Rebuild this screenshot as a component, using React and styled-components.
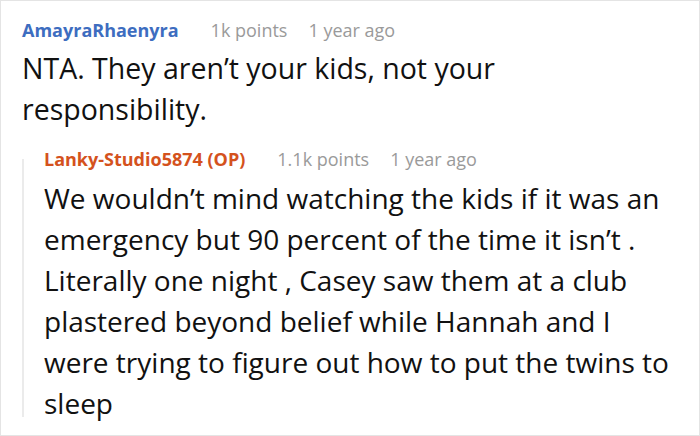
import React from "react";
import styled, { createGlobalStyle } from "styled-components";

const GlobalStyle = createGlobalStyle`
  html, body {
    margin: 0;
    padding: 0;
    background: #fff;
  }
  * {
    box-sizing: border-box;
  }
`;

const Frame = styled.div`
  width: 700px;
  height: 436px;
  border: 1px solid #e4e4e4;
  padding: 17px 0 0 21px;
  font-family: "Open Sans", "Noto Sans", sans-serif;
  color: #111;
  overflow: hidden;
`;

const Comment = styled.div`
  display: flex;
  flex-direction: column;
`;

const Meta = styled.div`
  display: flex;
  align-items: baseline;
  font-size: 18px;
  line-height: 24px;
  white-space: nowrap;
`;

const Author = styled.span`
  font-weight: 700;
  color: ${(p) => (p.$op ? "#d4521d" : "#3d6dc0")};
  margin-right: 32px;
`;

const Info = styled.span`
  color: #9a9a9a;
  margin-right: 21px;
`;

const Body = styled.div`
  margin-top: ${(p) => p.$top}px;
  font-size: ${(p) => p.$size}px;
  line-height: 41px;
`;

const Line = styled.span`
  display: block;
  white-space: nowrap;
`;

const Reply = styled.div`
  position: relative;
  margin-top: 17px;
  padding-left: 22px;
  &::before {
    content: "";
    position: absolute;
    left: 0;
    top: 12px;
    bottom: 7px;
    width: 2px;
    background: #ebebeb;
  }
`;

const comments = {
  parent: {
    author: "AmayraRhaenyra",
    points: "1k points",
    time: "1 year ago",
    lines: ["NTA. They aren\u2019t your kids, not your", "responsibility."],
  },
  reply: {
    author: "Lanky-Studio5874 (OP)",
    points: "1.1k points",
    time: "1 year ago",
    lines: [
      "We wouldn\u2019t mind watching the kids if it was an",
      "emergency but 90 percent of the time it isn\u2019t .",
      "Literally one night , Casey saw them at a club",
      "plastered beyond belief while Hannah and I",
      "were trying to figure out how to put the twins to",
      "sleep",
    ],
  },
};

function Header({ c, op }) {
  return (
    <Meta>
      <Author $op={op}>{c.author}</Author>
      <Info>{c.points}</Info>
      <Info>{c.time}</Info>
    </Meta>
  );
}

function Text({ lines, top, size }) {
  return (
    <Body $top={top} $size={size}>
      {lines.map((l) => (
        <Line key={l}>{l}</Line>
      ))}
    </Body>
  );
}

export default function App() {
  const { parent, reply } = comments;
  return (
    <>
      <GlobalStyle />
      <Frame>
        <Comment>
          <Header c={parent} />
          <Text lines={parent.lines} top={6} size={28.5} />
        </Comment>
        <Reply>
          <Header c={reply} op />
          <Text lines={reply.lines} top={7} size={28} />
        </Reply>
      </Frame>
    </>
  );
}
